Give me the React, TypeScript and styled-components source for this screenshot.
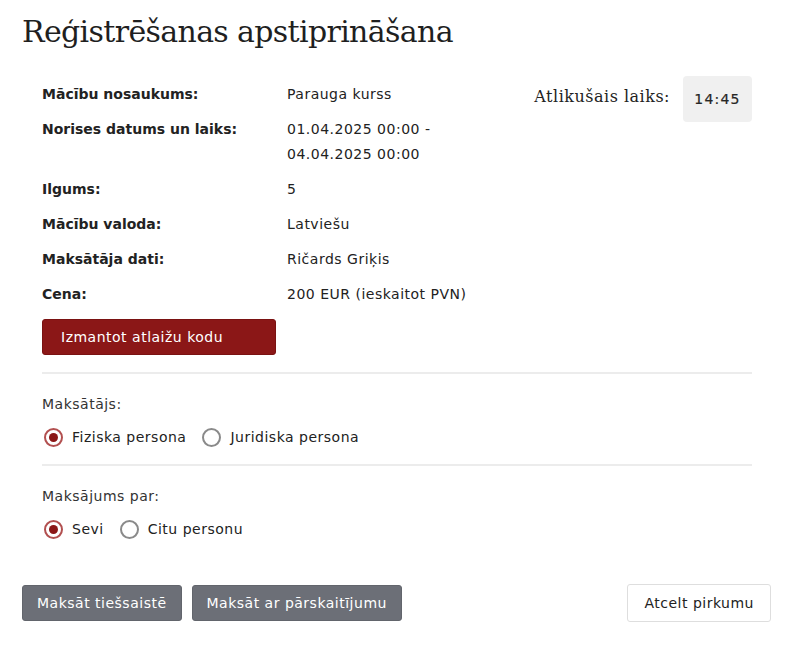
import React from "react";
import styled, { createGlobalStyle } from "styled-components";

const Global = createGlobalStyle`
  html, body { margin: 0; padding: 0; background: #ffffff; }
  body { font-family: "DejaVu Sans", "Open Sans", sans-serif; color: #222; }
  * { box-sizing: border-box; }
`;

const Page = styled.div`
  width: 786px;
  padding: 12px 15px 0 22px;
`;

const Title = styled.h1`
  margin: 0;
  font-family: "DejaVu Serif", "Liberation Serif", serif;
  font-weight: 400;
  font-size: 30px;
  letter-spacing: -0.65px;
  line-height: 40px;
  color: #1f1f1f;
`;

const Card = styled.div`
  padding: 30px 19px 0 20px;
  display: flex;
  flex-direction: column;
`;

const Top = styled.div`
  display: flex;
  justify-content: space-between;
  align-items: flex-start;
`;

const InfoGrid = styled.div`
  display: grid;
  grid-template-columns: 245px auto;
  row-gap: 10px;
  font-size: 14px;
  line-height: 25px;
`;

const Label = styled.div`
  font-weight: 700;
  color: #222;
`;

const Value = styled.div`
  color: #222;
  letter-spacing: 0.5px;
`;

const Timer = styled.div`
  display: flex;
  align-items: center;
  gap: 13px;
  margin-top: -6px;
`;

const TimerLabel = styled.span`
  font-family: "DejaVu Serif", "Liberation Serif", serif;
  font-size: 16px;
  letter-spacing: 0.5px;
  color: #222;
  margin-top: -6px;
`;

const TimerBox = styled.div`
  width: 69px;
  height: 46px;
  border-radius: 4px;
  background: #f0f0f0;
  display: flex;
  align-items: center;
  justify-content: center;
  font-size: 14px;
  color: #262626;
  letter-spacing: 1.2px;
  -webkit-text-stroke: 0.2px #262626;
`;

const Button = styled.button<{ $variant: "red" | "gray" | "light" }>`
  height: 36px;
  padding: 0 14px;
  border-radius: 3px;
  font-size: 14px;
  letter-spacing: 0.5px;
  font-family: "DejaVu Sans", "Open Sans", sans-serif;
  cursor: pointer;
  display: inline-flex;
  align-items: center;
  ${(p) =>
    p.$variant === "red"
      ? `background:#8b1717; color:#fff; border:1px solid #7a1212; padding: 0 18px;`
      : p.$variant === "gray"
      ? `background:#6c6f77; color:#fff; border:1px solid #62656c;`
      : `background:#fff; color:#222; border:1px solid #dedede; height:38px; padding: 0 16px;`}
`;

const DiscountRow = styled.div`
  margin-top: 12px;
  display: flex;
  & > button { width: 234px; }
`;

const Divider = styled.hr<{ $gap: number }>`
  border: 0;
  border-top: 2px solid #ececec;
  margin: ${(p) => p.$gap}px 0 0 0;
`;

const Section = styled.div`
  padding-top: 19px;
  display: flex;
  flex-direction: column;
  gap: 11px;
`;

const SectionLabel = styled.div`
  font-size: 14px;
  letter-spacing: 0.5px;
  line-height: 22px;
  color: #333;
`;

const RadioRow = styled.div`
  display: flex;
  align-items: center;
  gap: 14px;
`;

const RadioOption = styled.label`
  display: inline-flex;
  align-items: center;
  gap: 9px;
  font-size: 14px;
  letter-spacing: 0.5px;
  color: #222;
  line-height: 22px;
`;

const RadioCircle = styled.span<{ $checked: boolean }>`
  width: 19px;
  height: 19px;
  border-radius: 50%;
  border: 2px solid ${(p) => (p.$checked ? "#b25050" : "#8a8a8a")};
  display: inline-flex;
  align-items: center;
  justify-content: center;
  margin-left: 2px;
  &::after {
    content: "";
    width: 9px;
    height: 9px;
    border-radius: 50%;
    background: ${(p) => (p.$checked ? "#8b1717" : "transparent")};
  }
`;

const Actions = styled.div`
  display: flex;
  align-items: center;
  gap: 10px;
  margin-top: 44px;
`;

const Spacer = styled.div`
  flex: 1;
`;

const rows: [string, React.ReactNode][] = [
  ["Mācību nosaukums:", "Parauga kurss"],
  ["Norises datums un laiks:", <>01.04.2025 00:00 -<br />04.04.2025 00:00</>],
  ["Ilgums:", "5"],
  ["Mācību valoda:", "Latviešu"],
  ["Maksātāja dati:", "Ričards Griķis"],
  ["Cena:", "200 EUR (ieskaitot PVN)"],
];

function Radio({ checked, label }: { checked: boolean; label: string }) {
  return (
    <RadioOption>
      <RadioCircle $checked={checked} />
      {label}
    </RadioOption>
  );
}

export default function App() {
  return (
    <Page>
      <Global />
      <Title>Reģistrēšanas apstiprināšana</Title>
      <Card>
        <Top>
          <InfoGrid>
            {rows.map(([l, v]) => (
              <React.Fragment key={l}>
                <Label>{l}</Label>
                <Value>{v}</Value>
              </React.Fragment>
            ))}
          </InfoGrid>
          <Timer>
            <TimerLabel>Atlikušais laiks:</TimerLabel>
            <TimerBox>14:45</TimerBox>
          </Timer>
        </Top>
        <DiscountRow>
          <Button $variant="red">Izmantot atlaižu kodu</Button>
        </DiscountRow>
        <Divider $gap={17} />
        <Section>
          <SectionLabel>Maksātājs:</SectionLabel>
          <RadioRow>
            <Radio checked label="Fiziska persona" />
            <Radio checked={false} label="Juridiska persona" />
          </RadioRow>
        </Section>
        <Divider $gap={16} />
        <Section>
          <SectionLabel>Maksājums par:</SectionLabel>
          <RadioRow>
            <Radio checked label="Sevi" />
            <Radio checked={false} label="Citu personu" />
          </RadioRow>
        </Section>
      </Card>
      <Actions>
        <Button $variant="gray">Maksāt tiešsaistē</Button>
        <Button $variant="gray">Maksāt ar pārskaitījumu</Button>
        <Spacer />
        <Button $variant="light">Atcelt pirkumu</Button>
      </Actions>
    </Page>
  );
}
